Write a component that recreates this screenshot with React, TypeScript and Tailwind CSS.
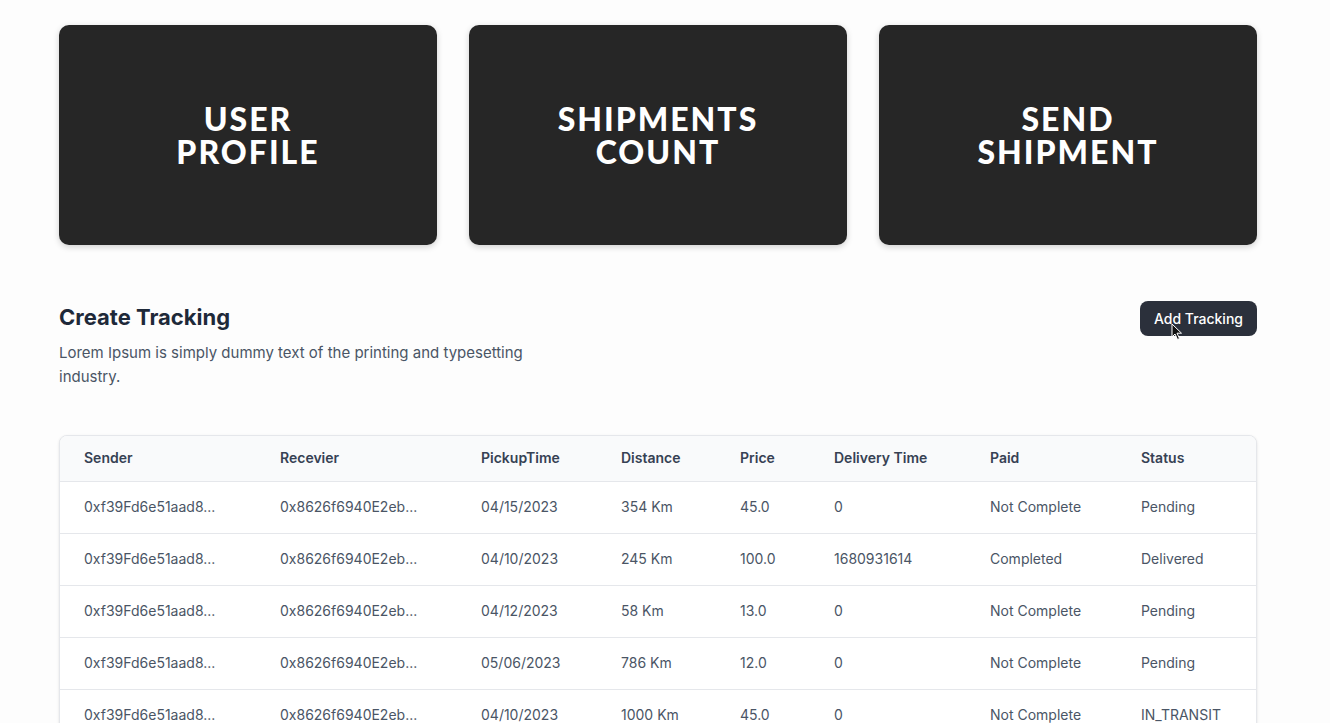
const cards = [
  ['USER', 'PROFILE'],
  ['SHIPMENTS', 'COUNT'],
  ['SEND', 'SHIPMENT'],
];

const columns = [
  { label: 'Sender', w: 'w-[196px]' },
  { label: 'Recevier', w: 'w-[201px]' },
  { label: 'PickupTime', w: 'w-[140px]' },
  { label: 'Distance', w: 'w-[119px]' },
  { label: 'Price', w: 'w-[94px]' },
  { label: 'Delivery Time', w: 'w-[156px]' },
  { label: 'Paid', w: 'w-[151px]' },
  { label: 'Status', w: '' },
];

const rows = [
  ['0xf39Fd6e51aad8...', '0x8626f6940E2eb...', '04/15/2023', '354 Km', '45.0', '0', 'Not Complete', 'Pending'],
  ['0xf39Fd6e51aad8...', '0x8626f6940E2eb...', '04/10/2023', '245 Km', '100.0', '1680931614', 'Completed', 'Delivered'],
  ['0xf39Fd6e51aad8...', '0x8626f6940E2eb...', '04/12/2023', '58 Km', '13.0', '0', 'Not Complete', 'Pending'],
  ['0xf39Fd6e51aad8...', '0x8626f6940E2eb...', '05/06/2023', '786 Km', '12.0', '0', 'Not Complete', 'Pending'],
  ['0xf39Fd6e51aad8...', '0x8626f6940E2eb...', '04/10/2023', '1000 Km', '45.0', '0', 'Not Complete', 'IN_TRANSIT'],
];

const Cursor = () => (
  <svg className="absolute left-[31px] top-[22px] w-[12px] h-[18px]" viewBox="0 0 12 18">
    <path d="M1 1 L1 14 L4 11 L6.5 16.5 L8.5 15.5 L6 10.2 L10.5 10.2 Z" fill="#111" stroke="#fff" strokeWidth="1" />
  </svg>
);

const App = () => {
  return (
    <div className="min-h-screen bg-[#fdfdfd] pl-[59px] pr-[73px] pt-[25px] font-['Inter',sans-serif] overflow-hidden h-[723px]">
      <div className="grid grid-cols-3 gap-8">
        {cards.map(([a, b]) => (
          <div
            key={a + b}
            className="h-[220px] rounded-[10px] bg-[#262626] shadow-[0_2px_6px_rgba(0,0,0,0.18)] flex items-center justify-center">
            <p className="text-center font-['Lato',sans-serif] font-black text-[32px] leading-[33px] tracking-[2px] text-white">
              {a}
              <br />
              {b}
            </p>
          </div>
        ))}
      </div>

      <div className="mt-[56px] flex justify-between items-start">
        <div className="max-w-lg">
          <h3 className="text-[22px] font-bold leading-8 text-gray-800">Create Tracking</h3>
          <p className="mt-2 text-[15px] leading-6 text-gray-600">
            Lorem Ipsum is simply dummy text of the printing and typesetting industry.
          </p>
        </div>
        <button className="relative h-[35px] px-[14px] rounded-lg bg-[#2b303b] text-white text-sm font-medium">
          Add Tracking
          <Cursor />
        </button>
      </div>

      <div className="mt-[46px] rounded-lg border border-gray-200 shadow-sm overflow-hidden bg-white">
        <table className="w-full table-fixed text-left text-sm">
          <thead className="bg-gray-50 text-gray-700">
            <tr className="border-b border-gray-200">
              {columns.map((c) => (
                <th key={c.label} className={`${c.w} h-[45px] pl-6 font-semibold`}>
                  {c.label}
                </th>
              ))}
            </tr>
          </thead>
          <tbody className="text-gray-600">
            {rows.map((r, i) => (
              <tr key={i} className="border-b border-gray-200">
                {r.map((cell, j) => (
                  <td key={j} className="h-[52px] pl-6 whitespace-nowrap">
                    {cell}
                  </td>
                ))}
              </tr>
            ))}
          </tbody>
        </table>
      </div>
    </div>
  );
};

export default App;
